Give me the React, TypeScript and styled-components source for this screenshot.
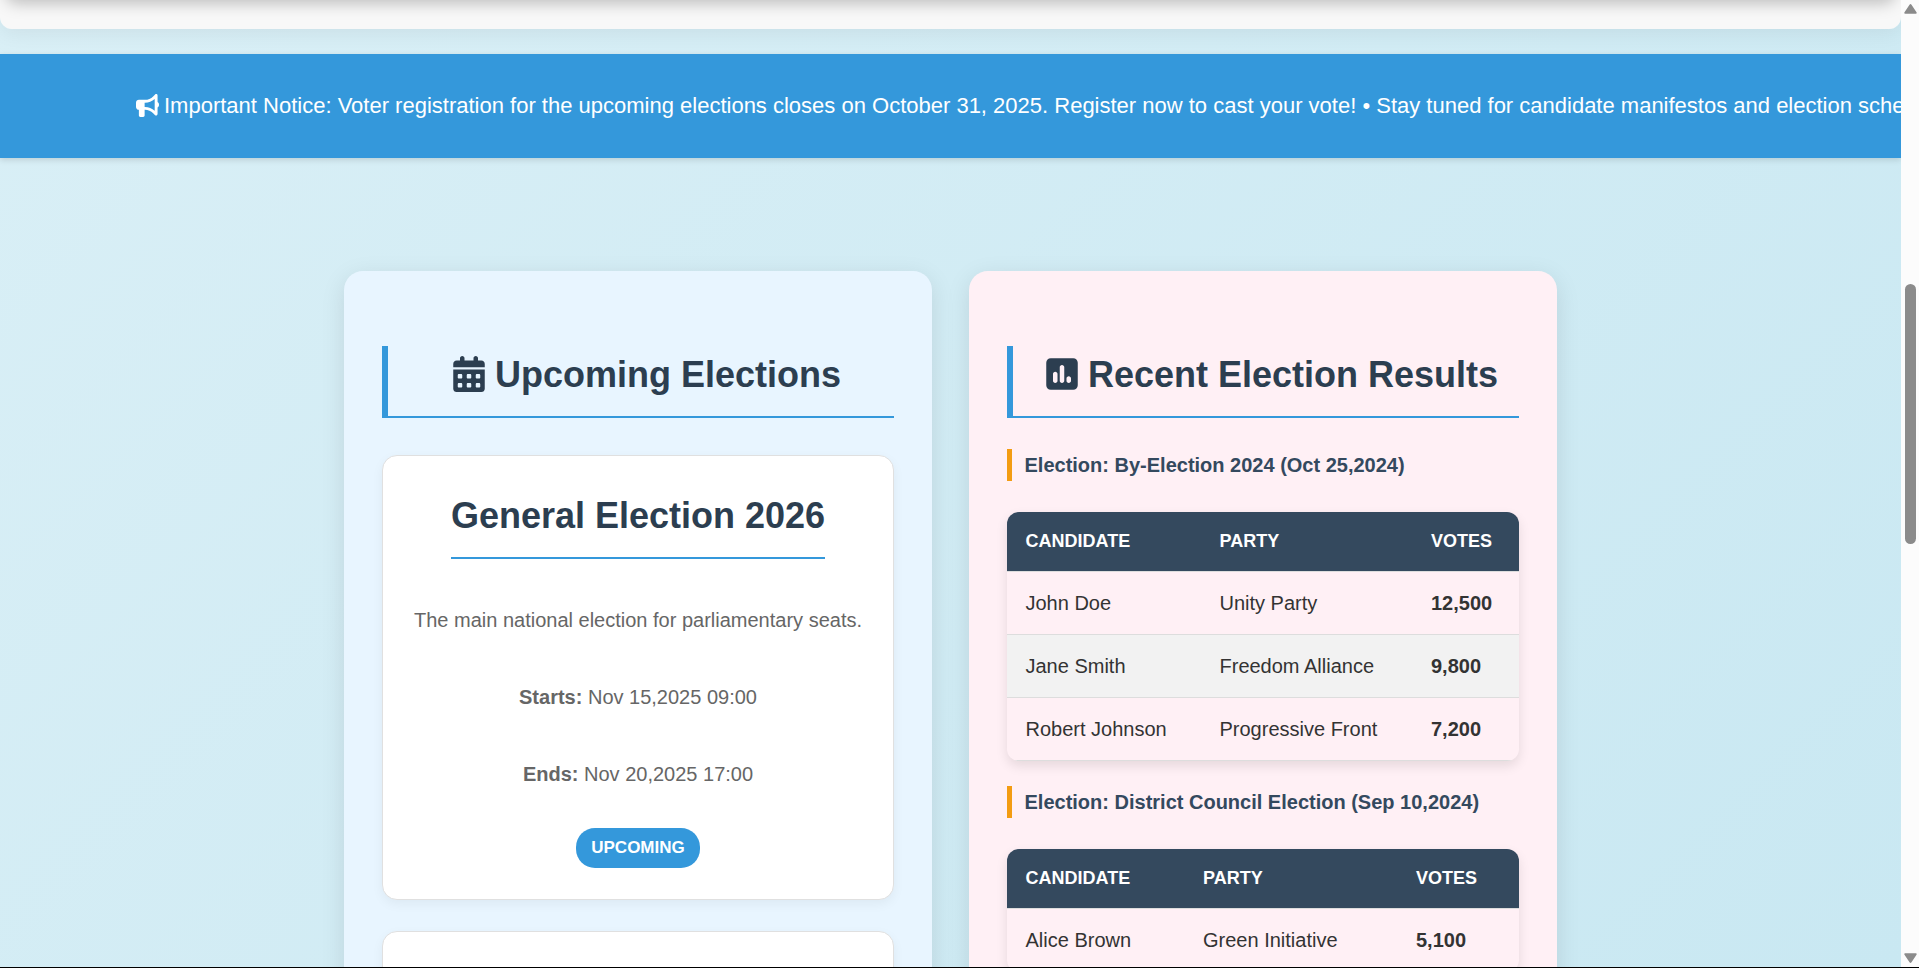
import React from "react";
import styled, { createGlobalStyle } from "styled-components";
import { FaBullhorn, FaCalendarDays, FaSquarePollVertical } from "react-icons/fa6";

const GlobalStyle = createGlobalStyle`
  *, *::before, *::after { box-sizing: border-box; }
  body {
    margin: 0;
    overflow: hidden;
    font-family: "Liberation Sans", Arial, sans-serif;
    font-size: 20px;
    line-height: 32px;
    color: #333;
  }
`;

const Window = styled.div`
  display: flex;
  width: 1919px;
  height: 968px;
  border-bottom: 1px solid #000;
  overflow: hidden;
`;

const Page = styled.div`
  width: 1901px;
  height: 967px;
  overflow: hidden;
  background: linear-gradient(135deg, #d9eff6 0%, #c9e8f2 100%);
`;

const Hero = styled.header`
  height: 29px;
  margin-bottom: 25px;
  overflow: hidden;
  border-radius: 0 0 12px 12px;
  background: #f8f8f8;
`;

const HeroShell = styled.div`
  border-radius: 0 0 12px 12px;
  box-shadow: 0 5px 19px rgba(0, 0, 0, 0.06);
`;

const Slide = styled.div`
  height: 40px;
  margin: -42px 6px 0;
  border-radius: 10px;
  box-shadow: 0 5px 16px rgba(0, 0, 0, 0.25);
`;

const Ticker = styled.div`
  display: flex;
  align-items: center;
  height: 104px;
  padding: 0 0 2px 135.5px;
  overflow: hidden;
  background: #3498db;
  color: #fff;
  font-size: 22px;
  line-height: 35px;
  white-space: nowrap;

  svg {
    flex: none;
    margin-right: 5.5px;
  }
`;

const TickerShell = styled.div`
  box-shadow: 0 2px 6px rgba(0, 0, 0, 0.13);
`;

const Columns = styled.main`
  display: grid;
  grid-template-columns: 588px 588px;
  gap: 37px;
  justify-content: center;
  padding-top: 113px;
`;

const Panel = styled.section<{ $tint: string }>`
  height: 900px;
  padding: 75px 38px 0;
  border-radius: 19px;
  background: ${(p) => p.$tint};
  box-shadow: 0 6px 25px rgba(0, 0, 0, 0.1);
`;

const PanelTitle = styled.h2`
  height: 72px;
  margin: 0;
  padding: 0 0 12px 10px;
  display: flex;
  align-items: center;
  justify-content: center;
  gap: 8px;
  border-left: 6px solid #3498db;
  border-bottom: 2px solid #3498db;
  color: #2c3e50;
  font-size: 36px;
  line-height: 58px;
  white-space: nowrap;

  svg {
    margin-bottom: 2px;
  }
`;

const ElectionCard = styled.article`
  display: flex;
  flex-direction: column;
  align-items: center;
  height: 445px;
  margin-top: 37px;
  padding-top: 31px;
  border: 1px solid #e0e0e0;
  border-radius: 15px;
  background: #fff;
  box-shadow: 0 4px 12px rgba(0, 0, 0, 0.05);
  color: #666;

  & + & {
    margin-top: 31px;
  }
`;

const ElectionName = styled.h3`
  height: 72px;
  margin: 0 0 45px;
  border-bottom: 2px solid #3498db;
  color: #2c3e50;
  font-size: 36px;
  line-height: 58px;
`;

const Detail = styled.p`
  margin: 0 0 45px;

  &:last-of-type {
    margin-bottom: 38px;
  }
`;

const Status = styled.span`
  height: 40px;
  padding: 6px 15px;
  border-radius: 19px;
  background: #3498db;
  color: #fff;
  font-size: 17px;
  font-weight: 700;
  line-height: 27px;
`;

const ResultTitle = styled.h4`
  margin: 31px 0;
  padding-left: 12.5px;
  border-left: 5px solid #f39c12;
  color: #34495e;
  font-size: 20px;
  line-height: 32px;

  table + & {
    margin-top: 25px;
  }
`;

const ResultTable = styled.table`
  width: 512px;
  table-layout: fixed;
  border-spacing: 0;
  border-radius: 12px;
  overflow: hidden;
  box-shadow: 0 5px 12px rgba(0, 0, 0, 0.1);
  text-align: left;
`;

const Col = styled.col<{ $w?: number }>`
  width: ${(p) => (p.$w ? `${p.$w}px` : "auto")};
`;

const HeadCell = styled.th`
  height: 60px;
  padding: 0 0 1px 18.5px;
  border-bottom: 1px solid #ddd;
  background: #34495e;
  color: #fff;
  font-size: 18px;
  line-height: 29px;
`;

const Row = styled.tr`
  &:nth-child(even) {
    background: #f2f2f2;
  }
`;

const Cell = styled.td`
  height: 63px;
  padding: 0 0 0 18.5px;
  border-bottom: 1px solid #ddd;

  &:last-child {
    font-weight: 700;
  }
`;

const Scrollbar = styled.div`
  display: flex;
  flex-direction: column;
  align-items: center;
  justify-content: space-between;
  width: 18px;
  height: 967px;
  padding: 4px 0;
  background: #fcfcfc;

  svg {
    display: block;
  }
`;

const Track = styled.div`
  flex: 1;
  padding-top: 270px;
`;

const Thumb = styled.div`
  width: 11px;
  height: 260px;
  border-radius: 6px;
  background: #8b8b8b;
`;

type Result = { candidate: string; party: string; votes: string };

const Results = ({ widths, rows }: { widths: [number, number]; rows: Result[] }) => (
  <ResultTable>
    <colgroup>
      <Col $w={widths[0]} />
      <Col $w={widths[1]} />
      <Col />
    </colgroup>
    <thead>
      <tr>
        <HeadCell>CANDIDATE</HeadCell>
        <HeadCell>PARTY</HeadCell>
        <HeadCell>VOTES</HeadCell>
      </tr>
    </thead>
    <tbody>
      {rows.map((r) => (
        <Row key={r.candidate}>
          <Cell>{r.candidate}</Cell>
          <Cell>{r.party}</Cell>
          <Cell>{r.votes}</Cell>
        </Row>
      ))}
    </tbody>
  </ResultTable>
);

const byElection: Result[] = [
  { candidate: "John Doe", party: "Unity Party", votes: "12,500" },
  { candidate: "Jane Smith", party: "Freedom Alliance", votes: "9,800" },
  { candidate: "Robert Johnson", party: "Progressive Front", votes: "7,200" },
];

const council: Result[] = [{ candidate: "Alice Brown", party: "Green Initiative", votes: "5,100" }];

export default function App() {
  return (
    <>
      <GlobalStyle />
      <Window>
        <Page>
          <HeroShell>
            <Hero>
              <Slide />
            </Hero>
          </HeroShell>
          <TickerShell>
            <Ticker>
              <FaBullhorn size={23} />
              Important Notice: Voter registration for the upcoming elections closes on October 31, 2025. Register now
              to cast your vote! • Stay tuned for candidate manifestos and election schedules.
            </Ticker>
          </TickerShell>
          <Columns>
            <Panel $tint="#e8f5ff">
              <PanelTitle>
                <FaCalendarDays size={36} />
                Upcoming Elections
              </PanelTitle>
              <ElectionCard>
                <ElectionName>General Election 2026</ElectionName>
                <Detail>The main national election for parliamentary seats.</Detail>
                <Detail>
                  <strong>Starts:</strong> Nov 15,2025 09:00
                </Detail>
                <Detail>
                  <strong>Ends:</strong> Nov 20,2025 17:00
                </Detail>
                <Status>UPCOMING</Status>
              </ElectionCard>
              <ElectionCard />
            </Panel>
            <Panel $tint="#fff0f5">
              <PanelTitle>
                <FaSquarePollVertical size={36} />
                Recent Election Results
              </PanelTitle>
              <ResultTitle>Election: By-Election 2024 (Oct 25,2024)</ResultTitle>
              <Results widths={[194, 211.5]} rows={byElection} />
              <ResultTitle>Election: District Council Election (Sep 10,2024)</ResultTitle>
              <Results widths={[177.5, 213]} rows={council} />
            </Panel>
          </Columns>
        </Page>
        <Scrollbar>
          <svg width="13" height="10" viewBox="0 0 13 10">
            <path d="M5.5.8a1.2 1.2 0 0 1 2 0l5 7.400a1 1 0 0 1-.8 1.500H1.300a1 1 0 0 1-.8-1.500z" fill="#8b8b8b" />
          </svg>
          <Track>
            <Thumb />
          </Track>
          <svg width="13" height="10" viewBox="0 0 13 10">
            <path d="M5.500 9.200a1.200 1.200 0 0 0 2 0l5-7.400a1 1 0 0 0-.8-1.500H1.300a1 1 0 0 0-.8 1.500z" fill="#8b8b8b" />
          </svg>
        </Scrollbar>
      </Window>
    </>
  );
}
